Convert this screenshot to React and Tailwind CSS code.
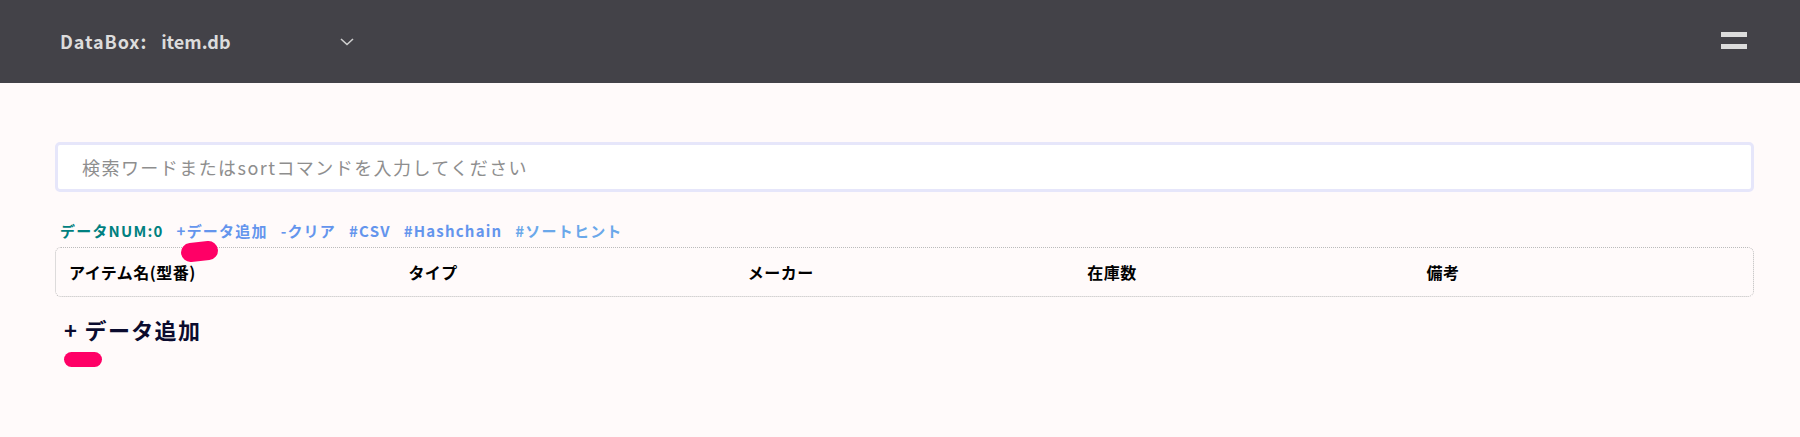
import React from "react";

const font = { fontFamily: '"Noto Sans CJK JP", "Noto Sans", sans-serif' };

function Blob({ className }) {
  return <span className={"absolute bg-[#ff0066] rounded-full " + className} />;
}

export default function App() {
  const links = ["+データ追加", "-クリア", "#CSV", "#Hashchain", "#ソートヒント"];
  const cols = ["アイテム名(型番)", "タイプ", "メーカー", "在庫数", "備考"];
  return (
    <div className="min-h-screen bg-[#fffafa]" style={font}>
      <header className="h-[83px] bg-[#434248] flex items-center pl-[60px] pr-[53px]">
        <span className="text-[18px] font-bold tracking-[0.05em] text-[#dcdcdc]">DataBox:</span>
        <div className="ml-[14px] w-[193px] flex items-center justify-between">
          <span className="text-[18px] font-semibold text-[#dcdcdc]">item.db</span>
          <svg width="14" height="8" viewBox="0 0 14 8">
            <polyline points="1,1 7,6.5 13,1" fill="none" stroke="#cfcfcf" strokeWidth="1.6" />
          </svg>
        </div>
        <div className="ml-auto flex flex-col gap-[7px] -mt-[3px]">
          <div className="w-[26px] h-[5px] bg-[#dcdcdc]" />
          <div className="w-[26px] h-[5px] bg-[#dcdcdc]" />
        </div>
      </header>

      <main className="pl-[55px] pr-[46px] pt-[59px]">
        <input
          className="w-full h-[50px] border-[3px] border-[#e6e6fa] rounded-[5px] bg-white pl-[24px] text-[18px] tracking-[0.08em] outline-none placeholder:text-[#8e8e8e]"
          placeholder="検索ワードまたはsortコマンドを入力してください"
        />

        <div className="mt-[29px] pl-[5px] flex items-center gap-[13px] h-[20px] text-[15px] font-bold tracking-[0.08em] leading-[20px]">
          <span className="text-[#008080]">データNUM:0</span>
          {links.map((l, i) => (
            <span key={l} className={"relative " + (i === 4 ? "text-[#6aa8ea]" : "text-[#6495ed]")}>
              {l}
              {i === 0 && <Blob className="left-[4px] top-full mt-[1px] w-[37px] h-[19px] -rotate-6" />}
            </span>
          ))}
        </div>

        <div className="mt-[6px] h-[50px] border border-dotted border-[#bbbbbb] rounded-[6px] grid grid-cols-5 items-center">
          {cols.map((c) => (
            <span key={c} className="pl-[13px] text-[16px] font-bold tracking-[0.03em] text-black">{c}</span>
          ))}
        </div>

        <div className="mt-[16px] pl-[9px]">
          <span className="relative inline-block text-[22px] leading-[32px] font-bold text-[#0b0b2e] tracking-[0.06em]">
            + データ追加
            <Blob className="left-0 top-full mt-[7px] w-[38px] h-[15px]" />
          </span>
        </div>
      </main>
    </div>
  );
}
